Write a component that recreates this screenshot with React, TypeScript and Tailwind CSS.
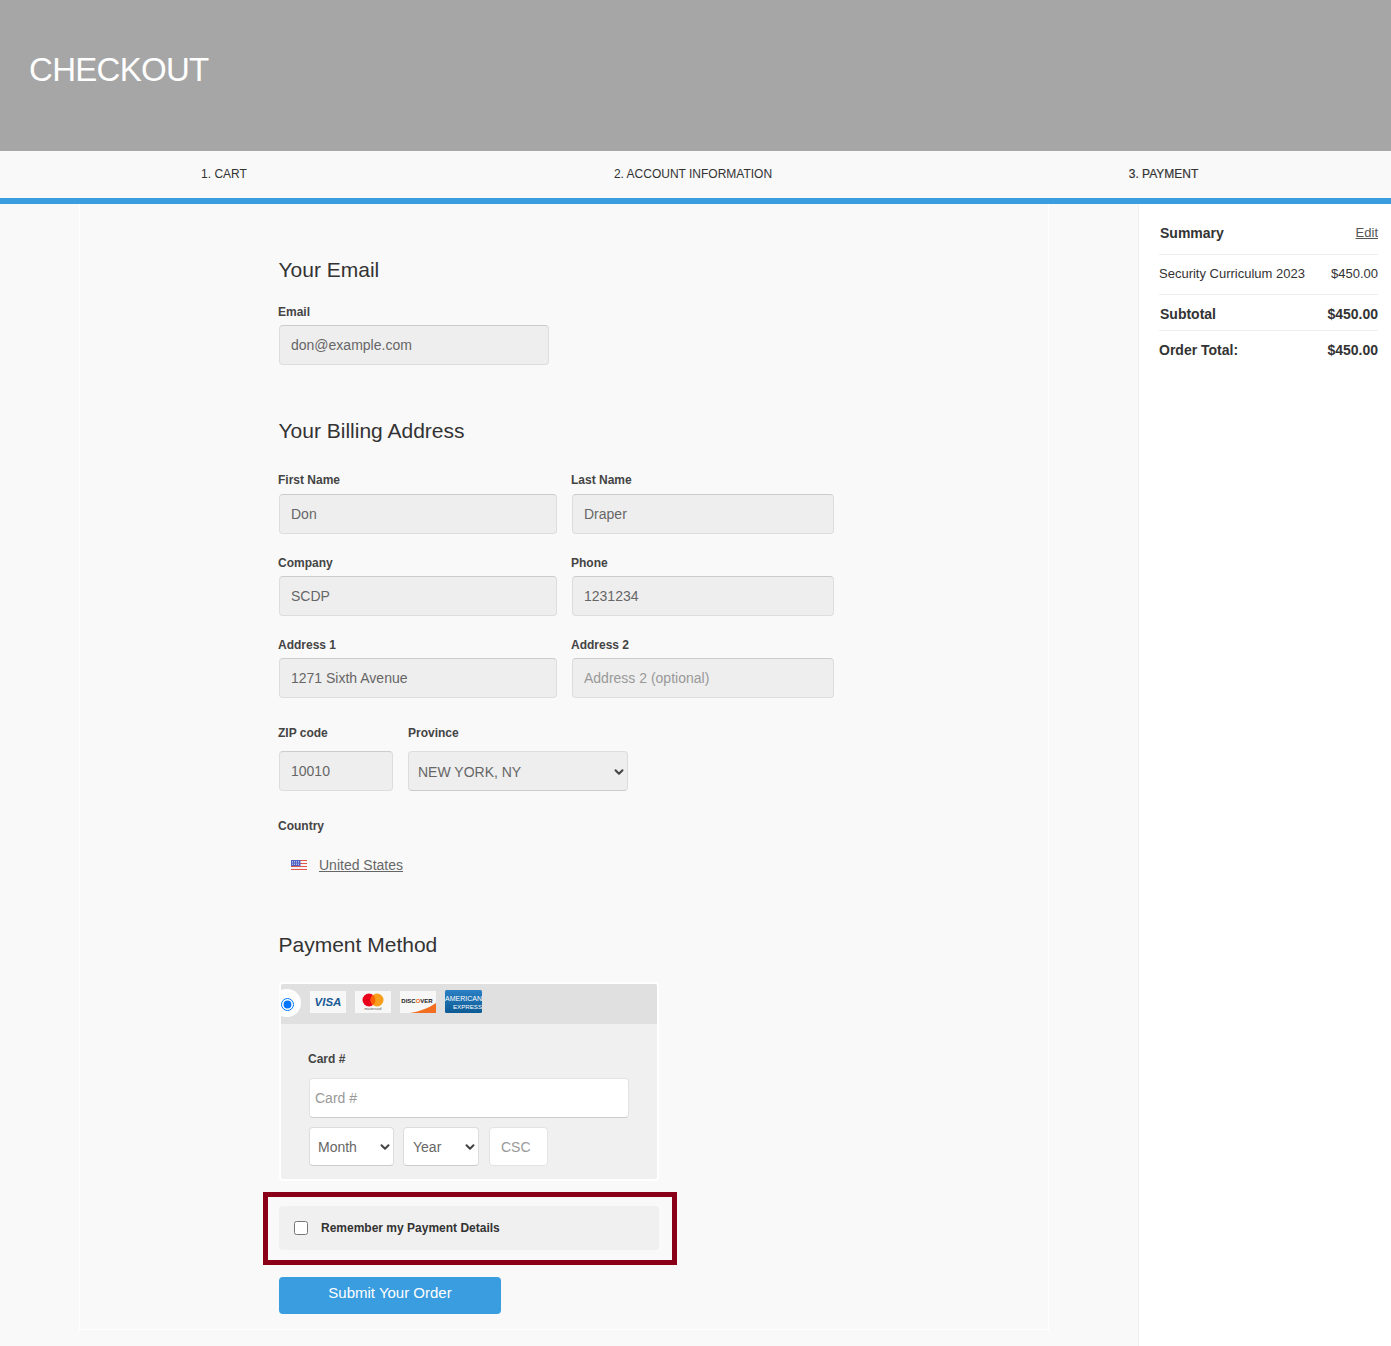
import { ChevronDown } from "lucide-react";

function Label({ children }: { children: React.ReactNode }) {
  return <label className="block text-xs font-bold text-[#444] leading-4">{children}</label>;
}

function Field({ label, value, placeholder, width, gap = "mt-1.5" }: { label: string; value?: string; placeholder?: string; width: string; gap?: string }) {
  return (
    <div className={width}>
      <Label>{label}</Label>
      <input
        readOnly
        value={value}
        placeholder={placeholder}
        className={`block ${gap} ml-px w-[calc(100%-1px)] h-10 px-[11px] pb-px text-sm text-[#666] placeholder:text-[#999] bg-[#eee] border border-[#ddd] border-t-[#ccc] rounded outline-none`}
      />
    </div>
  );
}

function Select({ value, className }: { value: string; className: string }) {
  return (
    <div className={`relative flex items-center pt-px rounded border border-[#ddd] border-b-[#ccc] text-sm text-[#666] ${className}`}>
      {value}
      <ChevronDown className="absolute right-px w-3.5 h-3.5 text-[#444]" strokeWidth={3.5} />
    </div>
  );
}

function VisaLogo() {
  return (
    <svg viewBox="0 0 36 22" className="w-9 h-[22px]">
      <rect width="36" height="22" fill="#f7f7f7" />
      <text x="18" y="15" textAnchor="middle" fontFamily="Liberation Sans" fontSize="11.5" fontWeight="700" fontStyle="italic" fill="#1a5a96">VISA</text>
    </svg>
  );
}

function MastercardLogo() {
  return (
    <svg viewBox="0 0 36 22" className="w-9 h-[22px]">
      <rect width="36" height="22" fill="#f7f7f7" />
      <circle cx="14" cy="9" r="6.5" fill="#eb001b" />
      <circle cx="22" cy="9" r="6.5" fill="#f79e1b" />
      <path d="M18 3.9a6.5 6.5 0 0 1 0 10.2a6.5 6.5 0 0 1 0-10.2z" fill="#ff5f00" />
      <text x="18" y="19" textAnchor="middle" fontFamily="Liberation Sans" fontSize="3.4" fill="#555">mastercard</text>
    </svg>
  );
}

function DiscoverLogo() {
  return (
    <svg viewBox="0 0 36 22" className="w-9 h-[22px]">
      <rect width="36" height="22" fill="#f7f7f7" />
      <path d="M10 22C22 20 30 16 36 12V22z" fill="#f26e21" />
      <text x="17" y="11.5" textAnchor="middle" fontFamily="Liberation Sans" fontSize="6" fontWeight="700" fill="#222">DISC<tspan fill="#f26e21">O</tspan>VER</text>
    </svg>
  );
}

function AmexLogo() {
  return (
    <svg viewBox="0 0 37 23" className="w-[37px] h-[23px]">
      <defs>
        <linearGradient id="amex" x1="0" y1="0" x2="0" y2="1">
          <stop offset="0" stopColor="#2a80c4" />
          <stop offset="1" stopColor="#0c5a94" />
        </linearGradient>
      </defs>
      <rect width="37" height="23" rx="1.5" fill="url(#amex)" />
      <text x="18.5" y="10.5" textAnchor="middle" fontFamily="Liberation Sans" fontSize="7" fill="#fff">AMERICAN</text>
      <text x="22.5" y="18.5" textAnchor="middle" fontFamily="Liberation Sans" fontSize="6.2" fill="#fff">EXPRESS</text>
    </svg>
  );
}

function UsFlag() {
  return (
    <svg viewBox="0 0 16 10" className="w-4 h-2.5">
      <rect width="16" height="10" fill="#f5f5f5" />
      <rect y="0" width="16" height="1" fill="#e0564a" />
      <rect y="3" width="16" height="1" fill="#e0564a" />
      <rect y="6" width="16" height="1" fill="#e0564a" />
      <rect y="9" width="16" height="1" fill="#e0564a" />
      <rect width="9.5" height="6" fill="#4f62c4" />
      <path d="M1 1.5h8M1 3h8M1 4.5h8" stroke="#fff" strokeWidth="0.6" strokeDasharray="1 1" />
    </svg>
  );
}

export default function App() {
  return (
    <div className="min-h-[1346px] bg-white text-[#333] font-['Liberation_Sans',Arial,sans-serif]">
      {/* Header */}
      <div className="h-[151px] bg-[#a6a6a6] pl-[29px] pt-[50px]">
        <h1 className="text-[33px] leading-10 text-white tracking-[-0.7px]">CHECKOUT</h1>
      </div>

      {/* Steps */}
      <div className="flex h-[53px] items-start border-b-[6px] border-[#3a9de0] bg-[#f9f9f9] text-xs">
        <div className="w-[448px] text-center leading-[46px]">1. CART</div>
        <div className="w-[490px] text-center leading-[46px]">2. ACCOUNT INFORMATION</div>
        <div className="flex-1 pr-0.5 text-center leading-[46px] font-medium [-webkit-text-stroke:0.2px]">3. PAYMENT</div>
      </div>

      <div className="flex">
        {/* Form column */}
        <div className="w-[1138px] bg-[#f9f9f9] pl-[79px] pb-[16px]">
          <div className="w-[970px] h-[1126px] border-x border-b border-white pl-[198px] pt-[54px]">
            <h2 className="ml-[0.5px] text-[21px] leading-6 text-[#333]">Your Email</h2>
            <div className="mt-[22px]">
              <Field label="Email" value="don@example.com" width="w-[271px]" gap="mt-[5px]" />
            </div>

            <h2 className="ml-[0.5px] mt-[54px] text-[21px] leading-6">Your Billing Address</h2>
            <div className="mt-[29px] flex flex-col gap-[21px]">
              <div className="flex gap-[14px]">
                <Field label="First Name" value="Don" width="w-[279px]" />
                <Field label="Last Name" value="Draper" width="w-[263px]" />
              </div>
              <div className="flex gap-[14px]">
                <Field label="Company" value="SCDP" width="w-[279px]" gap="mt-[5px]" />
                <Field label="Phone" value="1231234" width="w-[263px]" gap="mt-[5px]" />
              </div>
              <div className="flex gap-[14px]">
                <Field label="Address 1" value="1271 Sixth Avenue" width="w-[279px]" gap="mt-[5px]" />
                <Field label="Address 2" placeholder="Address 2 (optional)" width="w-[263px]" gap="mt-[5px]" />
              </div>
            </div>

            <div className="mt-[27px] flex gap-[14px]">
              <div className="w-[116px]">
                <Label>ZIP code</Label>
                <input
                  readOnly
                  value="10010"
                  className="block mt-2.5 ml-px w-[114px] h-10 px-[11px] text-sm text-[#666] bg-[#eee] border border-[#ddd] border-t-[#ccc] rounded outline-none"
                />
              </div>
              <div>
                <Label>Province</Label>
                <Select value="NEW YORK, NY" className="mt-2.5 w-[220px] h-10 pl-[9px] bg-[#eee]" />
              </div>
            </div>

            <div className="mt-[27px]">
              <Label>Country</Label>
              <div className="mt-[23px] ml-[13px] flex items-center gap-3 h-4 text-sm text-[#666]">
                <UsFlag />
                <a className="underline">United States</a>
              </div>
            </div>

            <h2 className="ml-[0.5px] mt-[60px] text-[21px] leading-6">Payment Method</h2>

            {/* Card box */}
            <div className="ml-px mt-[25px] w-[380px] h-[199px] overflow-hidden rounded border-2 border-white bg-[#f0f0f0]">
              <div className="flex h-10 items-start bg-[#e0e0e0]">
                <div className="-ml-[8px] mt-[5px] flex h-7 w-7 shrink-0 items-center justify-center rounded-full bg-white">
                  <input type="radio" checked readOnly className="m-0 mt-0.5 h-[13px] w-[13px] accent-[#0075ff]" />
                </div>
                <div className="ml-[9px] mt-[6px] flex items-center gap-[9px]">
                  <VisaLogo />
                  <MastercardLogo />
                  <DiscoverLogo />
                  <AmexLogo />
                </div>
              </div>
              <div className="pl-[27px] pt-[27px]">
                <Label>Card #</Label>
                <input
                  readOnly
                  placeholder="Card #"
                  className="block mt-[11px] ml-px w-[320px] h-10 px-[5px] pb-px text-sm placeholder:text-[#999] bg-white border border-[#e3e3e3] border-b-[#ccc] rounded outline-none"
                />
                <div className="mt-[9px] ml-px flex gap-[9px] items-start">
                  <Select value="Month" className="w-[85px] h-[39px] pl-2 bg-white" />
                  <Select value="Year" className="w-[76px] h-[39px] pl-[9px] bg-white" />
                  <input
                    readOnly
                    placeholder="CSC"
                    className="block ml-px w-[59px] h-[39px] pl-[11px] text-sm placeholder:text-[#999] bg-white border border-[#e3e3e3] rounded outline-none"
                  />
                </div>
              </div>
            </div>

            {/* Remember */}
            <div className="-ml-[15px] mt-[11px] w-[414px] h-[73px] border-[5px] border-[#8a0019] pl-[11px] pt-[9px]">
              <div className="flex h-11 w-[380px] items-center rounded bg-[#f0f0f0] pl-[15px] text-xs font-bold text-[#333]">
                <input type="checkbox" readOnly className="m-0 h-[14px] w-[14px]" />
                <span className="ml-[13px]">Remember my Payment Details</span>
              </div>
            </div>

            <button className="block ml-px mt-3 h-[37px] w-[222px] rounded bg-[#3a9de0] pb-1 text-[15px] text-white">
              Submit Your Order
            </button>
          </div>
        </div>

        {/* Summary */}
        <div className="flex-1 border-l border-[#f0f0f0] pl-5 pr-[13px] text-[#333]">
          <div className="flex h-[51px] items-center justify-between border-b border-[#eee] pl-px pt-2 text-sm">
            <span className="font-bold">Summary</span>
            <a className="underline text-[#555] text-[13px]">Edit</a>
          </div>
          <div className="flex h-10 items-center justify-between border-b border-[#eee] pb-0.5 text-[13px]">
            <span>Security Curriculum 2023</span>
            <span>$450.00</span>
          </div>
          <div className="flex h-9 items-center justify-between border-b border-[#eee] pl-px pt-0.5 text-sm font-bold">
            <span>Subtotal</span>
            <span>$450.00</span>
          </div>
          <div className="flex h-9 items-center justify-between pt-0.5 text-sm font-bold">
            <span>Order Total:</span>
            <span>$450.00</span>
          </div>
        </div>
      </div>
    </div>
  );
}
